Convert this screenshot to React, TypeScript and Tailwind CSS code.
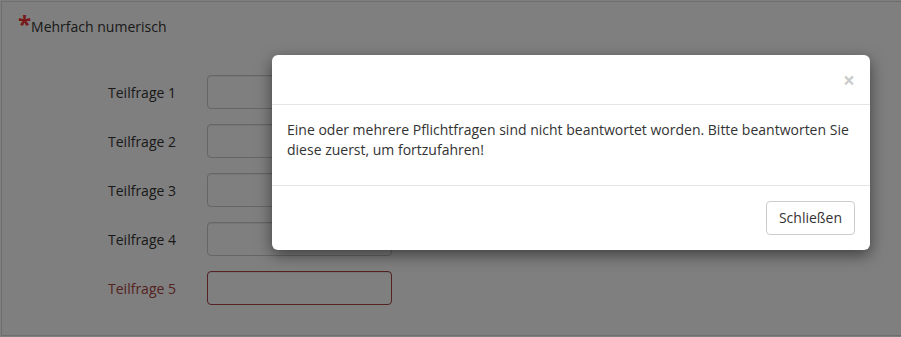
const rows = [1, 2, 3, 4, 5];

export default function App() {
    return (
        <div className="relative w-[901px] h-[337px] overflow-hidden bg-white font-['Open_Sans',sans-serif] text-[14px] text-[#333]">
            {/* Question panel */}
            <div className="ml-px mt-px h-[335px] w-[920px] border border-[#ddd]">
                <div className="flex items-start pl-[16px] pt-[10px]">
                    <span className="text-[24px] leading-[24px] font-bold text-[#e33]">*</span>
                    <span className="mt-[5px] leading-[20px]">Mehrfach numerisch</span>
                </div>

                <div className="mt-[38px] flex flex-col gap-[15px]">
                    {rows.map((n) => (
                        <div key={n} className="flex items-center h-[34px]">
                            <label
                                className={`w-[176px] pr-[2px] text-right ${n === 5 ? 'text-[#a94442]' : 'text-[#333]'}`}
                            >
                                Teilfrage {n}
                            </label>
                            <input
                                className={`ml-[29px] h-[34px] w-[185px] rounded border bg-white px-3 shadow-[inset_0_1px_1px_rgba(0,0,0,0.075)] ${n === 5 ? 'border-[#a94442]' : 'border-[#ccc]'}`}
                            />
                        </div>
                    ))}
                </div>
            </div>

            {/* Backdrop */}
            <div className="absolute inset-0 bg-black/50" />

            {/* Modal */}
            <div className="absolute left-[272px] top-[55px] w-[598px] rounded-md bg-white shadow-[0_5px_15px_rgba(0,0,0,0.5)]">
                <div className="flex h-[50px] items-center justify-end border-b border-[#e5e5e5] px-[15px]">
                    <button className="mt-[2px] text-[21px] font-bold leading-none text-black opacity-20">×</button>
                </div>
                <div className="px-[15px] pt-[15px] pb-[25px] leading-[20px]">
                    <p>
                        Eine oder mehrere Pflichtfragen sind nicht beantwortet worden. Bitte beantworten Sie diese
                        zuerst, um fortzufahren!
                    </p>
                </div>
                <div className="flex justify-end border-t border-[#e5e5e5] p-[15px]">
                    <button className="h-[34px] rounded border border-[#ccc] bg-white px-3 leading-[20px] text-[#333]">
                        Schließen
                    </button>
                </div>
            </div>
        </div>
    );
}
